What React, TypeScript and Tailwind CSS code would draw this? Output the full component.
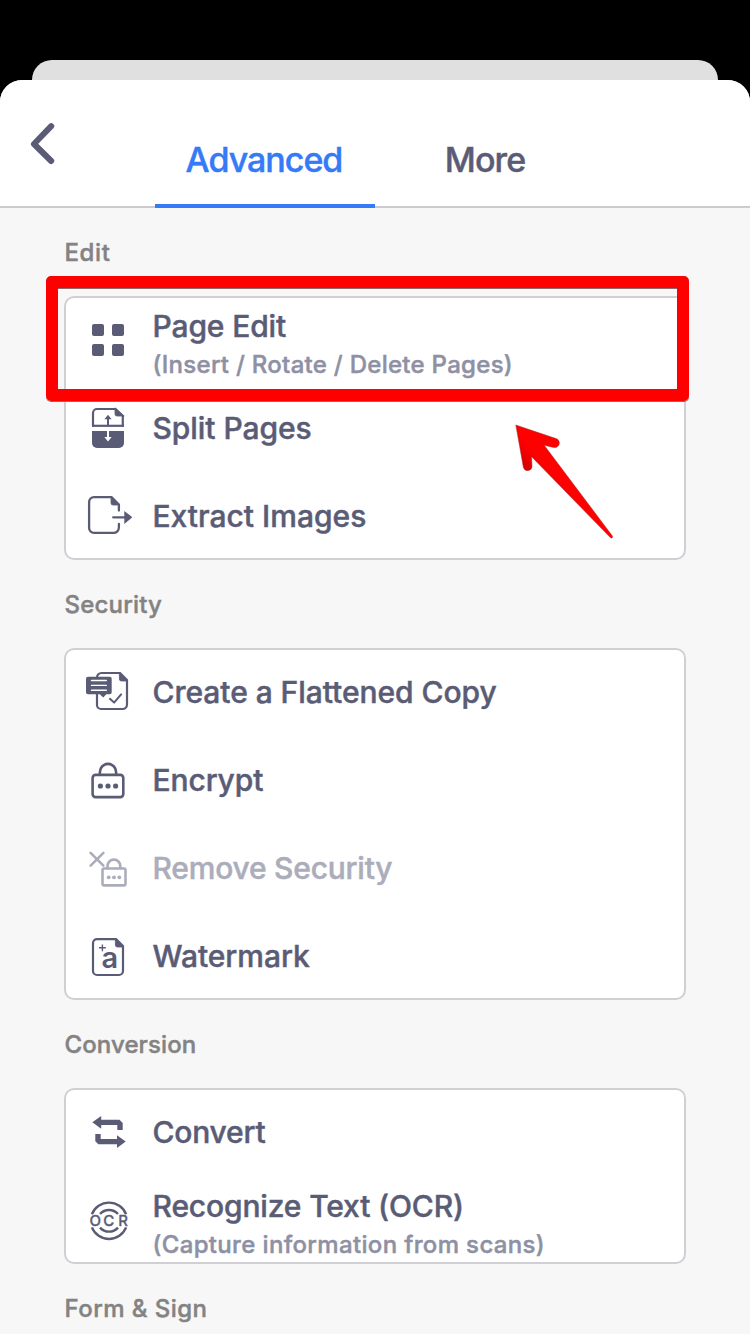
import type { ReactNode } from 'react';

const INK = '#5a5c76';

function Icon({ children, color = INK }: { children: ReactNode; color?: string }) {
  return (
    <svg
      width="56"
      height="56"
      viewBox="0 0 56 56"
      fill="none"
      stroke={color}
      strokeWidth="2.6"
      strokeLinecap="round"
      strokeLinejoin="round"
      className="shrink-0"
    >
      {children}
    </svg>
  );
}

function GridIcon() {
  return (
    <Icon>
      <g fill={INK} stroke="none">
        <rect x="12" y="12" width="12" height="12" rx="2" />
        <rect x="32" y="12" width="12" height="12" rx="2" />
        <rect x="12" y="32" width="12" height="12" rx="2" />
        <rect x="32" y="32" width="12" height="12" rx="2" />
      </g>
    </Icon>
  );
}

function SplitIcon() {
  return (
    <Icon>
      <path d="M13 26V13a4 4 0 0 1 4-4h18.5l7.3 7v10" strokeWidth="2.2" />
      <path d="M12 25.8h32" strokeLinecap="butt" strokeWidth="2.2" />
      <path d="M35 8.2V14a2 2 0 0 0 2 2h6.8z" fill={INK} stroke={INK} strokeWidth="0.8" />
      <path d="M12 31h32v12a5 5 0 0 1-5 5H17a5 5 0 0 1-5-5z" fill={INK} stroke="none" />
      <path d="M28 25v-6" strokeWidth="2" strokeLinecap="butt" />
      <path d="M24.4 19.2h7.2L28 14.8z" fill={INK} stroke="none" />
      <path d="M28 31v7" stroke="white" strokeWidth="2" strokeLinecap="butt" />
      <path d="M24.4 37h7.2L28 41.4z" fill="white" stroke="none" />
    </Icon>
  );
}

function ExtractIcon() {
  return (
    <Icon>
      <path
        d="M38.9 22.6V16.5L31.5 9.1H14A4.9 4.9 0 0 0 9.1 14V40A4.9 4.9 0 0 0 14 44.9H33.5a5.4 5.4 0 0 0 5.4-5.4V36"
        strokeWidth="2.3"
      />
      <path d="M31 8.4v6.6a2 2 0 0 0 2 2h6.6z" fill={INK} stroke={INK} strokeWidth="0.8" />
      <path d="M33.2 29.3H46" strokeWidth="2.3" />
      <path d="M44.3 23l7.2 5.5a1 1 0 0 1 0 1.6l-7.2 5.9z" fill={INK} stroke="none" />
    </Icon>
  );
}

function FlattenIcon() {
  return (
    <Icon>
      <path
        d="M40 9H21.5A4.5 4.5 0 0 0 17 13.5V41a4 4 0 0 0 4 4H42.5a4.5 4.5 0 0 0 4.5-4.5V16z"
        strokeWidth="2.2"
      />
      <path d="M39.4 8.4v6.6a2 2 0 0 0 2 2h6.2z" fill={INK} stroke={INK} strokeWidth="0.8" />
      <path
        d="M8 12.7h21.7a2 2 0 0 1 2 2v13.6a2 2 0 0 1-2 2h-3.4l-3 3.2-3.6-3.2H8a2 2 0 0 1-2-2V14.7a2 2 0 0 1 2-2z"
        fill={INK}
        stroke="none"
      />
      <path d="M11.5 16.5h14.8M11.5 21.4h14.8M11.5 26.3h14.8" stroke="white" strokeWidth="1.4" />
      <path d="M29.9 34.8l4.2 3.8 7-8.2" strokeWidth="2" />
    </Icon>
  );
}

function LockIcon() {
  return (
    <Icon>
      <rect x="12.6" y="22.9" width="30.7" height="22.2" rx="3" />
      <path d="M19.9 22.5v-2.5a8.1 8.1 0 0 1 16.2 0v2.5" />
      <g fill={INK} stroke="none">
        <circle cx="20.4" cy="34" r="2.6" />
        <circle cx="28" cy="34" r="2.6" />
        <circle cx="35.6" cy="34" r="2.6" />
      </g>
    </Icon>
  );
}

function UnlockIcon() {
  const c = '#acadbb';
  return (
    <Icon color={c}>
      <path d="M10.6 12.8l12.8 12.8M23.4 12.8L10.6 25.6" />
      <rect x="22.5" y="28.5" width="23" height="16.9" rx="1.6" />
      <path d="M27.5 28v-2a6.4 6.4 0 0 1 12.8 0v2" />
      <g fill={c} stroke="none">
        <circle cx="28.7" cy="37.3" r="1.9" />
        <circle cx="34" cy="37.3" r="1.9" />
        <circle cx="39.3" cy="37.3" r="1.9" />
      </g>
    </Icon>
  );
}

function WatermarkIcon() {
  return (
    <Icon>
      <path
        d="M36 11.1H17a4 4 0 0 0-4 4V43a4 4 0 0 0 4 4H39a4 4 0 0 0 4-4V18z"
        strokeWidth="2.2"
      />
      <path d="M35.4 10.4v6.6a2 2 0 0 0 2 2h6.2z" fill={INK} stroke={INK} strokeWidth="0.8" />
      <path d="M22.4 16.4v6.8M19 19.8h6.8" strokeWidth="1.4" strokeLinecap="butt" />
      <text x="21.6" y="40.4" fill={INK} stroke="none" className="font-['Inter'] text-[29px] font-semibold">
        a
      </text>
    </Icon>
  );
}

function ConvertIcon() {
  return (
    <Icon>
      <g fill={INK} stroke="none">
        <path d="M12.3 18.3L21.2 12v3.7H39.5l3.2 3.2V26h-5.4V21H21.2v3.7z" />
        <path d="M45.7 37.4L37 31.2V35H20.7V30h-5.4v7.3l3 3H37V44z" />
      </g>
    </Icon>
  );
}

function OcrIcon() {
  return (
    <Icon>
      <g strokeLinecap="butt" strokeWidth="2.4">
        <path d="M11.9 22.2a18.4 18.4 0 0 1 34.2 0" />
        <path d="M11.9 35.4a18.4 18.4 0 0 0 34.2 0" />
        <path d="M20 22a12 12 0 0 1 18 0" />
        <path d="M20 35.6a12 12 0 0 0 18 0" />
      </g>
      <g fill={INK} stroke={INK} strokeWidth="0.3" className="font-['Inter'] text-[15px] font-medium">
        <text x="9.4" y="34.4">O</text>
        <text x="23.2" y="34.4">C</text>
        <text x="38.2" y="34.4">R</text>
      </g>
    </Icon>
  );
}

type RowProps = { icon: ReactNode; label: ReactNode; spacing: string; sub?: string; subSpacing?: string; muted?: boolean };

function Row({ icon, label, spacing, sub, subSpacing = '', muted }: RowProps) {
  return (
    <div className="flex h-[88px] items-center gap-[16.5px] pl-4">
      {icon}
      <div className={`whitespace-nowrap ${sub ? 'pt-3' : ''}`}>
        <div
          className={`text-[30px] font-medium ${spacing} ${muted ? 'text-[#acadbb]' : 'text-[#5a5c76]'} ${sub ? 'leading-[35px]' : 'leading-9'}`}
        >
          {label}
        </div>
        {sub && <div className={`pt-[3px] text-[24px] leading-9 font-medium text-[#8e90a4] ${subSpacing}`}>{sub}</div>}
      </div>
    </div>
  );
}

function Section({ title, spacing, children }: { title: string; spacing: string; children?: ReactNode }) {
  return (
    <section>
      <h2 className={`flex h-[88px] items-center pt-0.5 pl-[0.5px] text-[24px] leading-7 font-medium text-[#838383] ${spacing}`}>
        {title}
      </h2>
      {children && (
        <div className="rounded-[10px] bg-white shadow-[inset_0_0_0_2px_#cfcfd4]">{children}</div>
      )}
    </section>
  );
}

export default function App() {
  return (
    <div className="relative flex h-[1334px] w-[750px] flex-col overflow-hidden bg-black pt-[60px] font-['Inter',sans-serif] [-webkit-text-stroke-width:0.45px]">
      <div className="mx-8 h-5 shrink-0 rounded-t-[20px] bg-[#e0e0e0]" />
      <div className="flex flex-1 flex-col rounded-t-[22px] bg-[#f7f7f7]">
        <header className="flex h-32 shrink-0 rounded-t-[22px] border-b-2 border-[#cbcbd0] bg-white">
          <div className="w-[155px] pt-10 pl-7">
            <svg width="32" height="48" viewBox="0 0 32 48" fill="none" stroke={INK} strokeWidth="6" strokeLinecap="round" strokeLinejoin="round">
              <path d="M23.2 6.2L6 24l17.2 17" />
            </svg>
          </div>
          <div className="flex h-32 w-[220px] justify-center border-b-4 border-[#357af6] pt-[60px] pr-0.5 text-[34px] leading-10 font-medium tracking-[-1px] text-[#357af6]">
            Advanced
          </div>
          <div className="flex w-[220px] justify-center pt-[60px] text-[34px] leading-10 font-medium tracking-[-0.9px] text-[#5a5c76]">
            More
          </div>
        </header>
        <main className="h-[1126px] overflow-hidden px-16">
          <Section title="Edit" spacing="tracking-[0.6px]">
            <Row
              icon={<GridIcon />}
              label="Page Edit"
              spacing="tracking-[-0.13px]"
              sub="(Insert / Rotate / Delete Pages)"
              subSpacing="tracking-[0.28px]"
            />
            <Row icon={<SplitIcon />} label="Split Pages" spacing="tracking-[-0.05px]" />
            <Row icon={<ExtractIcon />} label="Extract Images" spacing="tracking-[0px]" />
          </Section>
          <Section title="Security" spacing="tracking-[0.2px]">
            <Row icon={<FlattenIcon />} label="Create a Flattened Copy" spacing="tracking-[-0.05px]" />
            <Row icon={<LockIcon />} label="Encrypt" spacing="tracking-[-0.1px]" />
            <Row icon={<UnlockIcon />} label="Remove Security" spacing="tracking-[-0.22px]" muted />
            <Row icon={<WatermarkIcon />} label="Watermark" spacing="tracking-[-0.05px]" />
          </Section>
          <Section title="Conversion" spacing="tracking-[0.1px]">
            <Row icon={<ConvertIcon />} label="Convert" spacing="tracking-[-0.2px]" />
            <Row
              icon={<OcrIcon />}
              label="Recognize Text (OCR)"
              spacing="tracking-[-0.15px]"
              sub="(Capture information from scans)"
              subSpacing="tracking-[0.35px]"
            />
          </Section>
          <Section title="Form &amp; Sign" spacing="tracking-[0.45px]" />
        </main>
      </div>

      <div className="absolute top-[276px] left-[46px] h-[125px] w-[643px] rounded-[5px] border-12 border-[#fe0000] shadow-[0_1px_0_#8a6a6a,inset_0_1px_0_#8a6a6a]" />
      <svg className="absolute top-[420px] left-[510px]" width="110" height="124" viewBox="510 420 110 124">
        <defs>
          <linearGradient id="arrow" gradientUnits="userSpaceOnUse" x1="535" y1="475" x2="554" y2="458">
            <stop offset="0" stopColor="#dd0000" />
            <stop offset="0.55" stopColor="#ff0000" />
          </linearGradient>
        </defs>
        <path
          d="M515.8 425L556 438.6A4.4 4.4 0 0 1 553.5 447.4L544.2 445.3L612.4 536A1.3 1.3 0 0 1 610.6 537.8L531.6 456.7L532 466.5A4.4 4.4 0 0 1 523.4 467.5Z"
          fill="url(#arrow)"
          stroke="#a03030"
          strokeWidth="0.5"
        />
      </svg>
    </div>
  );
}
